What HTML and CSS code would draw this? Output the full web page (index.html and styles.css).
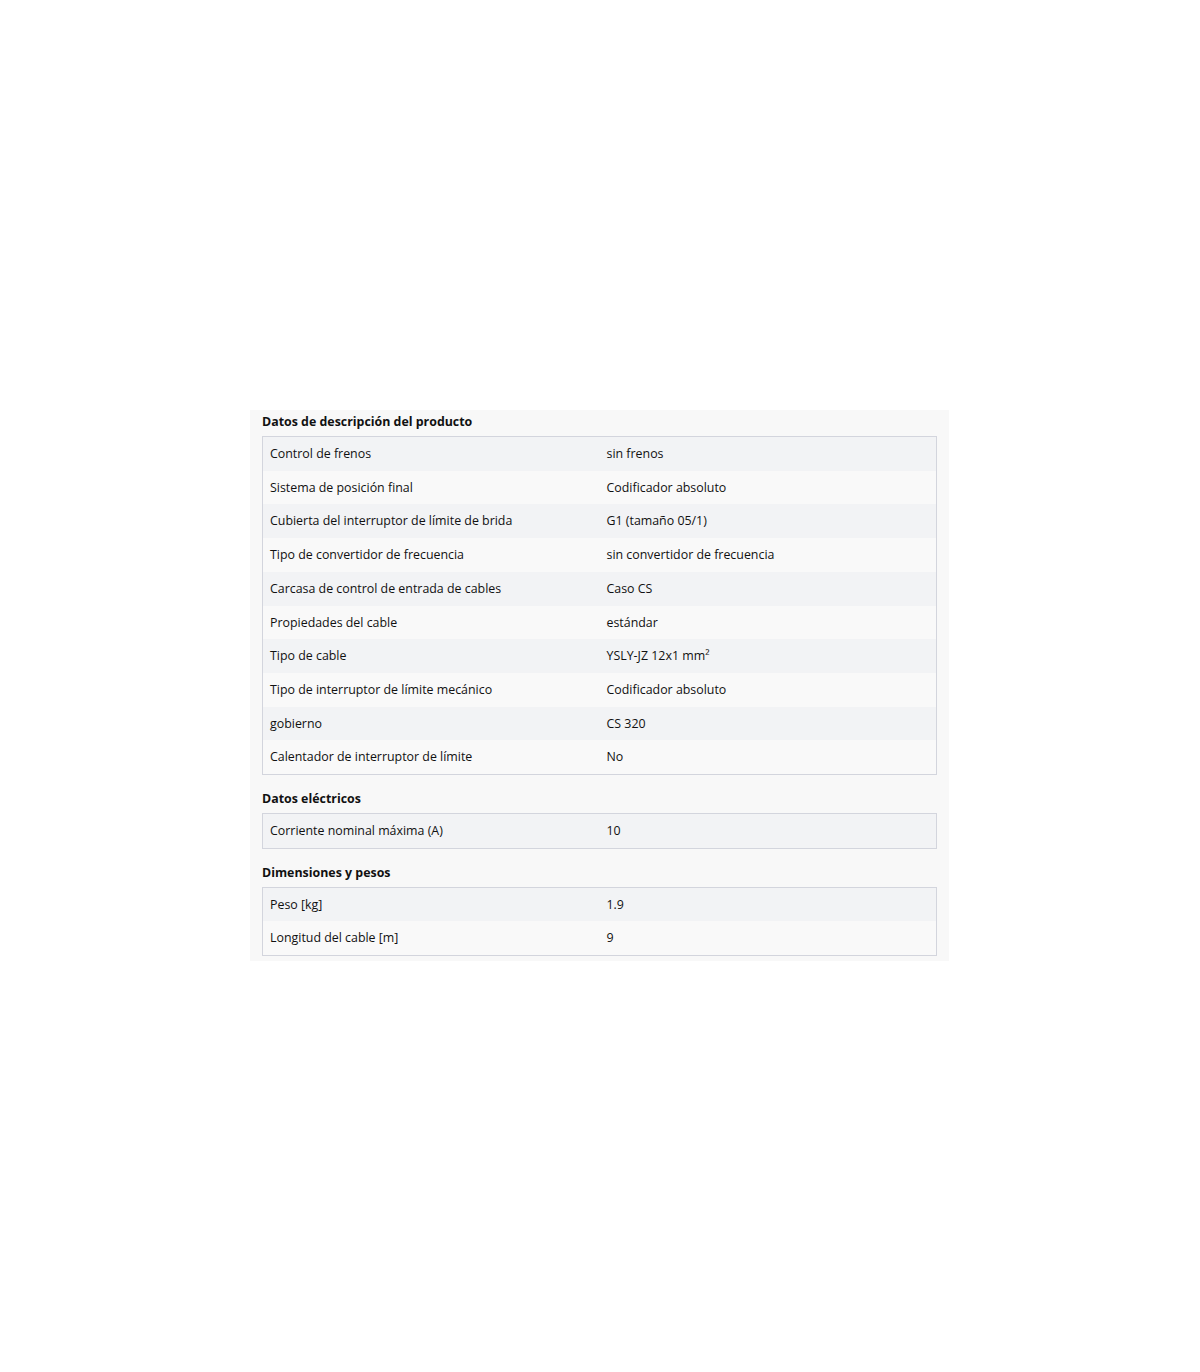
FILE: index.html
```html
<!DOCTYPE html>
<html lang="es">
<head>
<meta charset="utf-8">
<link rel="stylesheet" href="styles.css">
</head>
<body>
<div class="page">
  <div class="panel">
    <h3 class="heading">Datos de descripción del producto</h3>
    <table class="spec">
      <tr><td>Control de frenos</td><td>sin frenos</td></tr>
      <tr><td>Sistema de posición final</td><td>Codificador absoluto</td></tr>
      <tr><td>Cubierta del interruptor de límite de brida</td><td>G1 (tamaño 05/1)</td></tr>
      <tr><td>Tipo de convertidor de frecuencia</td><td>sin convertidor de frecuencia</td></tr>
      <tr><td>Carcasa de control de entrada de cables</td><td>Caso CS</td></tr>
      <tr><td>Propiedades del cable</td><td>estándar</td></tr>
      <tr><td>Tipo de cable</td><td>YSLY-JZ 12x1 mm²</td></tr>
      <tr><td>Tipo de interruptor de límite mecánico</td><td>Codificador absoluto</td></tr>
      <tr><td>gobierno</td><td>CS 320</td></tr>
      <tr><td>Calentador de interruptor de límite</td><td>No</td></tr>
    </table>
    <h3 class="heading">Datos eléctricos</h3>
    <table class="spec">
      <tr><td>Corriente nominal máxima (A)</td><td>10</td></tr>
    </table>
    <h3 class="heading">Dimensiones y pesos</h3>
    <table class="spec last">
      <tr><td>Peso [kg]</td><td>1.9</td></tr>
      <tr><td>Longitud del cable [m]</td><td>9</td></tr>
    </table>
  </div>
</div>
</body>
</html>
```

FILE: styles.css
```css
html, body {
  margin: 0;
  padding: 0;
  background: #ffffff;
}
body {
  font-family: "Open Sans", "Noto Sans", "Liberation Sans", sans-serif;
  color: #111111;
  font-size: 12.4px;
}
.page {
  padding: 410px 0 0 250px;
  display: flex;
}
.panel {
  width: 675px;
  background: #f8f8f8;
  padding: 2px 12px 5px 12px;
}
.heading {
  margin: 0 0 4px 0;
  font-size: 12.4px;
  font-weight: 700;
  line-height: 20px;
}
.spec {
  width: 100%;
  border-collapse: collapse;
  border: 1px solid #d3d5dd;
  margin-bottom: 14px;
  table-layout: fixed;
}
.spec.last {
  margin-bottom: 0;
}
.spec td {
  width: 50%;
  padding: 8px 7px;
  line-height: 17.7px;
  vertical-align: middle;
}
.spec tr:nth-child(odd) td {
  background: #f2f3f5;
}
.spec tr:nth-child(even) td {
  background: #f9f9f9;
}
```
